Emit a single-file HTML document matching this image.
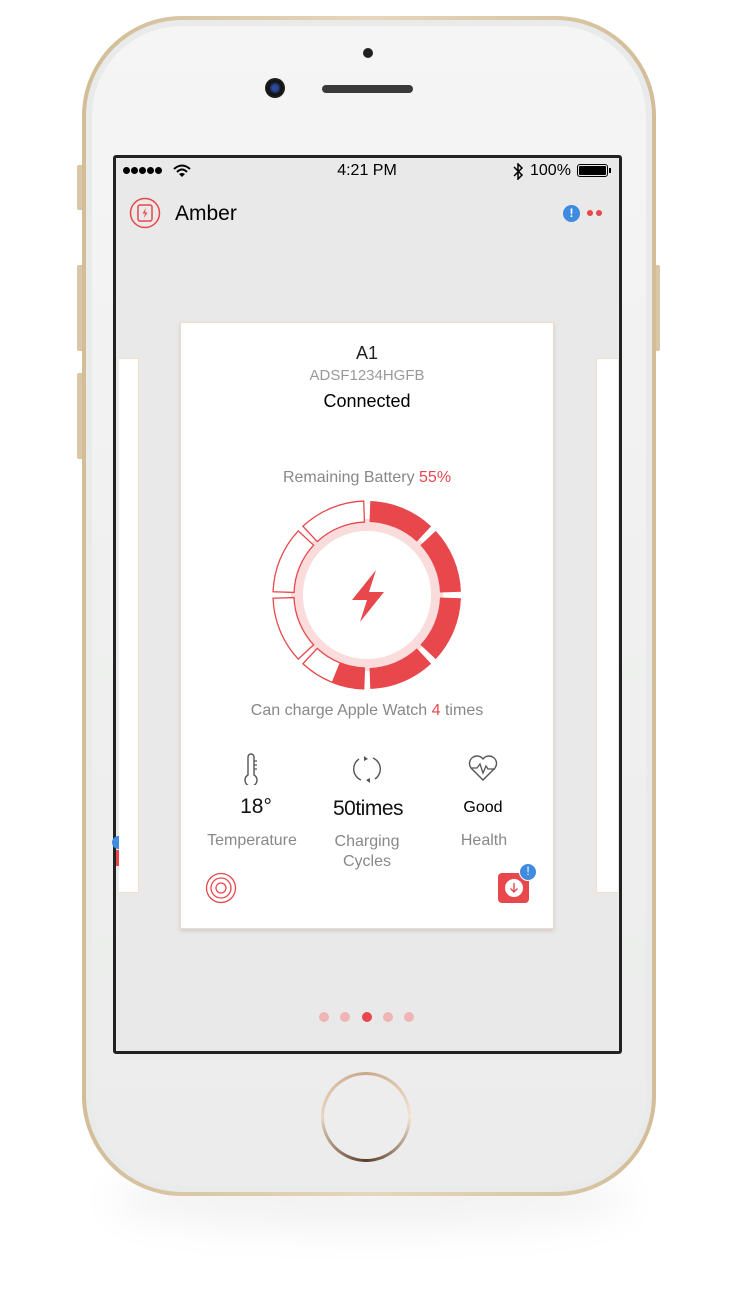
<!DOCTYPE html>
<html><head><meta charset="utf-8"><style>
*{margin:0;padding:0;box-sizing:border-box}
body{width:750px;height:1300px;background:#fff;position:relative;overflow:hidden;font-family:"Liberation Sans",sans-serif}
.abs{position:absolute}
.t{position:absolute;white-space:nowrap;text-align:center;transform:translateX(-50%)}
</style></head><body>
<div class="abs" style="left:110px;top:1170px;width:520px;height:60px;border-radius:50%;background:rgba(0,0,0,0.05);filter:blur(18px)"></div>
<div class="abs" style="left:77px;top:165px;width:8px;height:45px;background:#d9c6a6;border-radius:2px"></div>
<div class="abs" style="left:77px;top:265px;width:8px;height:86px;background:#d9c6a6;border-radius:2px"></div>
<div class="abs" style="left:77px;top:373px;width:8px;height:86px;background:#d9c6a6;border-radius:2px"></div>
<div class="abs" style="left:652px;top:265px;width:8px;height:86px;background:#d9c6a6;border-radius:2px"></div>
<div class="abs" style="left:82px;top:16px;width:574px;height:1180px;border-radius:100px;background:linear-gradient(90deg,#d3bd98,#e6d6bb 50%,#d3bd98)"></div>
<div class="abs" style="left:86px;top:20px;width:566px;height:1172px;border-radius:96px;background:#e9eaea"></div>
<div class="abs" style="left:92px;top:26px;width:554px;height:1160px;border-radius:90px;background:linear-gradient(#f5f5f5,#eeefee 60%,#ebeceb)"></div>
<div class="abs" style="left:363px;top:48px;width:10px;height:10px;border-radius:50%;background:#222"></div>
<div class="abs" style="left:265px;top:78px;width:20px;height:20px;border-radius:50%;background:radial-gradient(circle,#2a4a9a 20%,#111 45%,#333 100%)"></div>
<div class="abs" style="left:322px;top:85px;width:91px;height:8px;border-radius:4px;background:#3a3a3a"></div>
<div class="abs" style="left:113px;top:155px;width:509px;height:899px;border:3px solid #222;border-radius:3px;background:#e8e9e8;overflow:hidden"></div>
<div class="abs" style="left:123px;top:167px;font-size:0">
<span style="display:inline-block;width:7px;height:7px;border-radius:50%;background:#000;margin-right:1px"></span><span style="display:inline-block;width:7px;height:7px;border-radius:50%;background:#000;margin-right:1px"></span><span style="display:inline-block;width:7px;height:7px;border-radius:50%;background:#000;margin-right:1px"></span><span style="display:inline-block;width:7px;height:7px;border-radius:50%;background:#000;margin-right:1px"></span><span style="display:inline-block;width:7px;height:7px;border-radius:50%;background:#000"></span></div>
<svg class="abs" style="left:173px;top:164px" width="18" height="14" viewBox="0 0 18 14"><path d="M1 5 Q9 -2 17 5" stroke="#000" stroke-width="2" fill="none"/><path d="M4 8 Q9 3 14 8" stroke="#000" stroke-width="2" fill="none"/><path d="M9 13 L6 10 Q9 8 12 10Z" fill="#000"/></svg>
<div class="t" style="left:367px;top:162px;font-size:16px;color:#000">4:21 PM</div>
<svg class="abs" style="left:512px;top:163px" width="12" height="17" viewBox="0 0 12 17"><path d="M2 4 L10 12 L6 16 L6 1 L10 5 L2 13" stroke="#000" stroke-width="1.5" fill="none"/></svg>
<div class="abs" style="left:530px;top:162px;font-size:16px;color:#000">100%</div>
<div class="abs" style="left:577px;top:164px;width:31px;height:13px;border:1.5px solid #000;border-radius:3px;padding:1px"><div style="width:100%;height:100%;background:#000;border-radius:1px"></div></div>
<div class="abs" style="left:609px;top:168px;width:2px;height:5px;background:#000"></div>
<svg class="abs" style="left:129px;top:197px" width="32" height="32" viewBox="0 0 32 32"><circle cx="16" cy="16" r="14.5" fill="none" stroke="#e8474c" stroke-width="1.5"/><rect x="9" y="8" width="14" height="16" rx="2" fill="none" stroke="#e8474c" stroke-width="1.5"/><path d="M17 11 L13.5 16.5 L16 16.5 L15 21 L18.5 15.5 L16 15.5Z" fill="#e8474c"/></svg>
<div class="abs" style="left:175px;top:202px;font-size:21px;color:#000">Amber</div>
<div class="abs" style="left:563px;top:205px;width:17px;height:17px;border-radius:50%;background:#3f8be0;color:#fff;font-size:12px;font-weight:bold;text-align:center;line-height:17px">!</div>
<div class="abs" style="left:587px;top:210px;width:6px;height:6px;border-radius:50%;background:#e8474c"></div>
<div class="abs" style="left:596px;top:210px;width:6px;height:6px;border-radius:50%;background:#e8474c"></div>
<div class="abs" style="left:112px;top:836px;width:13px;height:13px;border-radius:50%;background:#3f8be0"></div>
<div class="abs" style="left:116px;top:850px;width:3px;height:16px;background:#e8474c"></div>
<div class="abs" style="left:116px;top:358px;width:23px;height:535px;background:#fff;border:1px solid #f6dccb;border-left:none;clip-path:inset(0 0 0 3px)"></div>
<div class="abs" style="left:596px;top:358px;width:22px;height:535px;background:#fff;border:1px solid #f6dccb;border-right:none"></div>
<div class="abs" style="left:180px;top:322px;width:374px;height:607px;background:#fff;border:1px solid #f7d9c8;box-shadow:0 2px 4px rgba(0,0,0,0.12)"></div>
<div class="t" style="left:367px;top:343px;font-size:18px;color:#222">A1</div>
<div class="t" style="left:367px;top:367px;font-size:15px;color:#999">ADSF1234HGFB</div>
<div class="t" style="left:367px;top:391px;font-size:18px;color:#000">Connected</div>
<div class="t" style="left:367px;top:469px;font-size:16px;color:#888">Remaining Battery <span style="color:#e8474c">55%</span></div>
<svg class="abs" style="left:267px;top:495px" width="200" height="200" viewBox="-100 -100 200 200">
<circle r="70" fill="none" stroke="#fbdcdc" stroke-width="12"/>
<circle r="64" fill="#fff"/>
<g fill="#e8474c">
<path id="s" d="M3.28,-93.94 A94,94 0 0 1 64.11,-68.75 L49.79,-53.39 A73,73 0 0 0 2.55,-72.96Z"/>
<use href="#s" transform="rotate(45)"/><use href="#s" transform="rotate(90)"/><use href="#s" transform="rotate(135)"/>
</g>
<g fill="#fff" stroke="#e8474c" stroke-width="1.3">
<use href="#s" transform="rotate(180)"/><use href="#s" transform="rotate(225)"/><use href="#s" transform="rotate(270)"/><use href="#s" transform="rotate(315)"/>
</g>
<path d="M3.28,-93.94 A94,94 0 0 1 35.21,-87.16 L27.35,-67.69 A73,73 0 0 0 2.55,-72.96Z" fill="#e8474c" transform="rotate(180)"/>
<path d="M9,-25 L-15,5 L0,5 L-7,27 L17,-3 L2,-3Z" fill="#e8474c"/>
</svg>
<div class="t" style="left:367px;top:702px;font-size:16px;color:#888">Can charge Apple Watch <span style="color:#e8474c">4</span> times</div>
<svg class="abs" style="left:240px;top:753px" width="22" height="32" viewBox="0 0 22 32"><path d="M8 22 V4 A3 3 0 0 1 14 4 V22 A6 6 0 1 1 8 22Z" fill="none" stroke="#555" stroke-width="1.4"/><path d="M14 8h3M14 12h3M14 16h3" stroke="#555" stroke-width="1.2"/></svg>
<svg class="abs" style="left:351px;top:753px" width="32" height="32" viewBox="0 0 32 32"><path d="M22 5 A12 12 0 0 1 24 26" fill="none" stroke="#555" stroke-width="1.4"/><path d="M10 27 A12 12 0 0 1 8 6" fill="none" stroke="#555" stroke-width="1.4"/><path d="M13 3 L17 6 L13 8Z M19 25 L15 27 L19 30Z" fill="#555"/></svg>
<svg class="abs" style="left:467px;top:754px" width="32" height="28" viewBox="0 0 32 28"><path d="M16 26 L4 14 A7 7 0 0 1 16 5 A7 7 0 0 1 28 14Z" fill="none" stroke="#555" stroke-width="1.4"/><path d="M4 14 H10 L13 10 L16 19 L19 12 L21 15 H28" fill="none" stroke="#555" stroke-width="1.3"/></svg>
<div class="t" style="left:256px;top:795px;font-size:21px;color:#111">18°</div>
<div class="t" style="left:368px;top:797px;font-size:21px;color:#111;letter-spacing:-0.5px">50times</div>
<div class="t" style="left:483px;top:799px;font-size:16px;color:#000">Good</div>
<div class="t" style="left:252px;top:832px;font-size:16px;color:#888">Temperature</div>
<div class="t" style="left:367px;top:832px;font-size:16px;color:#888;line-height:20px">Charging<br>Cycles</div>
<div class="t" style="left:484px;top:832px;font-size:16px;color:#888">Health</div>
<svg class="abs" style="left:205px;top:872px" width="32" height="32" viewBox="0 0 32 32"><circle cx="16" cy="16" r="14.5" fill="none" stroke="#e8474c" stroke-width="1.3"/><circle cx="16" cy="16" r="10" fill="none" stroke="#e8474c" stroke-width="1.3"/><circle cx="16" cy="16" r="5" fill="none" stroke="#e8474c" stroke-width="1.3"/></svg>
<div class="abs" style="left:498px;top:873px;width:31px;height:30px;border-radius:4px;background:#e8474c"></div>
<svg class="abs" style="left:503px;top:877px" width="22" height="22" viewBox="0 0 22 22"><circle cx="11" cy="11" r="9" fill="#fff"/><path d="M11 6 V15 M7.5 11.5 L11 15 L14.5 11.5" stroke="#e8474c" stroke-width="1.4" fill="none"/></svg>
<div class="abs" style="left:519px;top:863px;width:18px;height:18px;border-radius:50%;background:#3f8be0;border:1.5px solid #fff;color:#fff;font-size:12px;text-align:center;line-height:15px">!</div>
<div class="abs" style="left:319px;top:1012px;width:10px;height:10px;border-radius:50%;background:#f0b5b5"></div>
<div class="abs" style="left:340px;top:1012px;width:10px;height:10px;border-radius:50%;background:#f0b5b5"></div>
<div class="abs" style="left:362px;top:1012px;width:10px;height:10px;border-radius:50%;background:#e8474c"></div>
<div class="abs" style="left:383px;top:1012px;width:10px;height:10px;border-radius:50%;background:#f0b5b5"></div>
<div class="abs" style="left:404px;top:1012px;width:10px;height:10px;border-radius:50%;background:#f0b5b5"></div>
<div class="abs" style="left:321px;top:1072px;width:90px;height:90px;border-radius:50%;background:conic-gradient(#c9a88a,#f3e4d2,#5a3d2a,#e9d6c0,#c9a88a);"></div>
<div class="abs" style="left:324px;top:1075px;width:84px;height:84px;border-radius:50%;background:#ecedec"></div>
</body></html>
